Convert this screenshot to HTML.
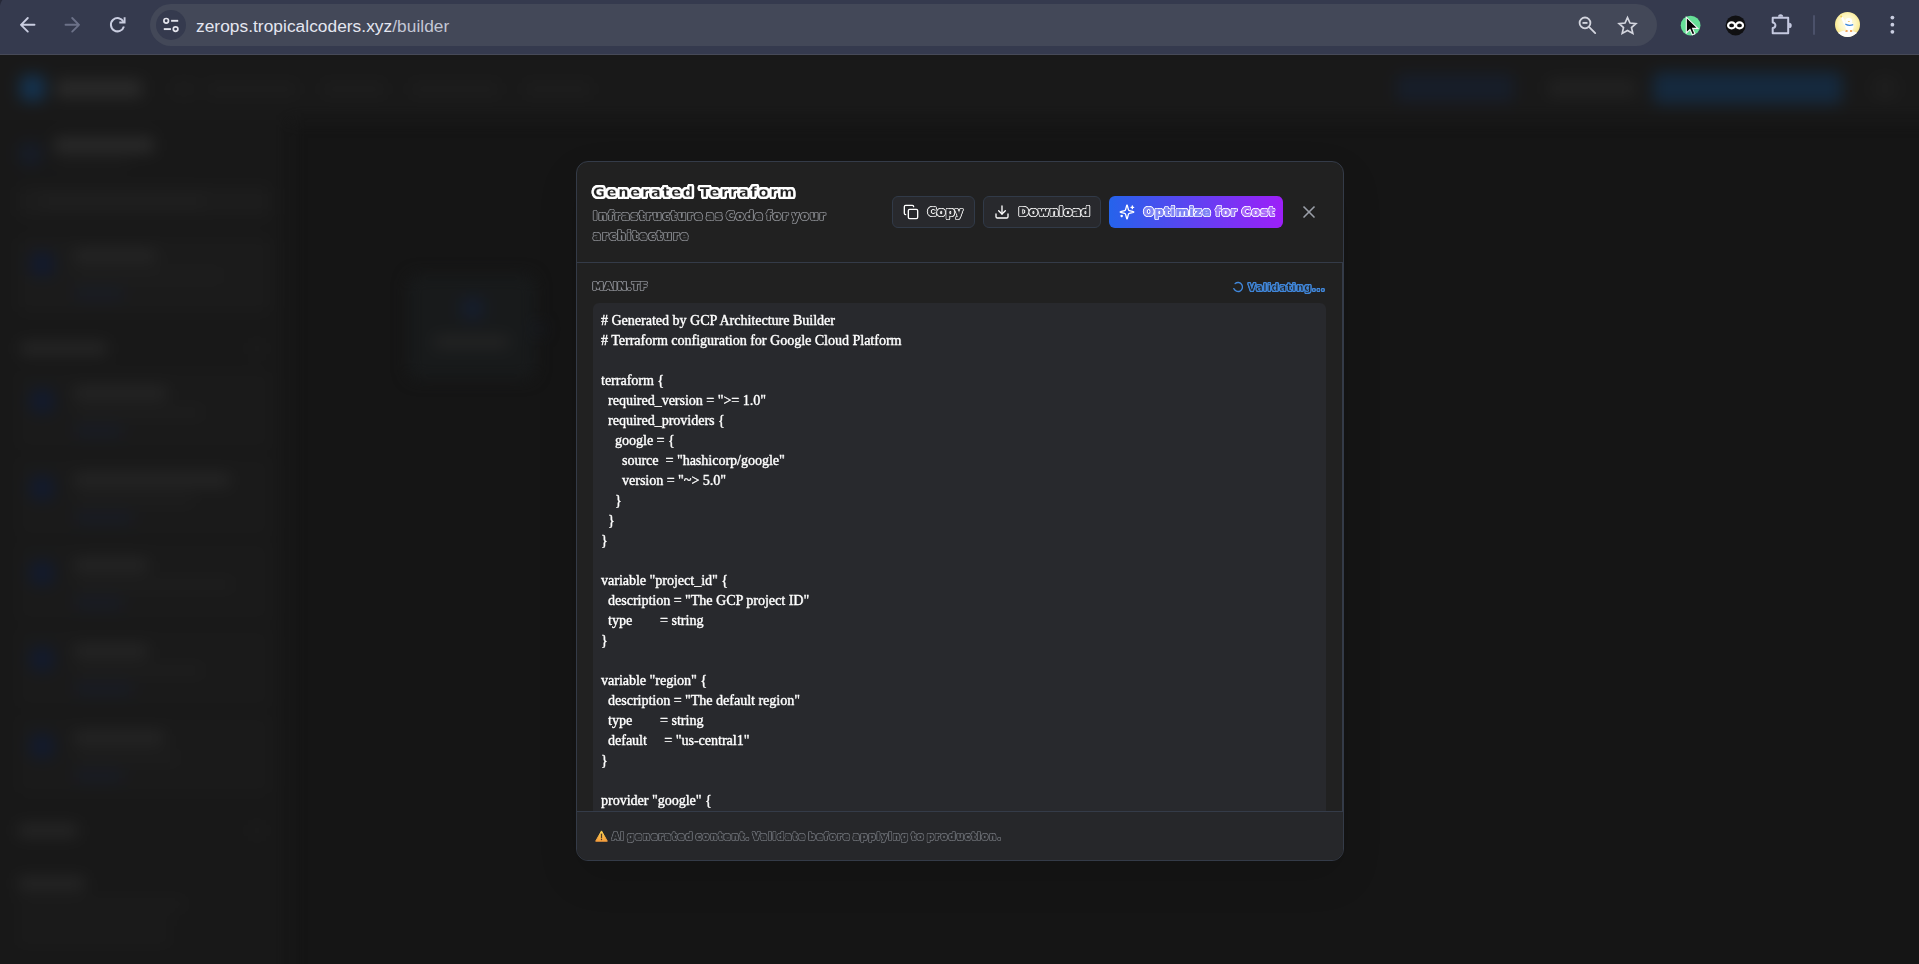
<!DOCTYPE html>
<html lang="en">
<head>
<meta charset="utf-8">
<title>GCP Architecture Builder</title>
<style>
*{box-sizing:border-box;margin:0;padding:0}
html,body{width:1919px;height:964px;overflow:hidden;background:#161616;font-family:"Liberation Sans",sans-serif;color:#fff}
/* ---------- browser chrome ---------- */
#chrome{position:absolute;left:0;top:0;width:1919px;height:55px;background:#353a4e;border-bottom:1px solid #474a58}
#chrome svg{position:absolute;overflow:visible}
#omni{position:absolute;left:150px;top:4px;width:1507px;height:42px;border-radius:21px;background:#434858}
#site{position:absolute;left:156px;top:10px;width:30px;height:30px;border-radius:15px;background:#353a4e}
#url{position:absolute;left:196px;top:14px;font-size:17.3px;line-height:24px;color:#e4e6f0;white-space:nowrap;letter-spacing:0.05px}
#url span{color:#c3c6d4}
.sep{position:absolute;left:1812.500px;top:15px;width:2.200px;height:19.500px;border-radius:1.100px;background:#4b516a}
/* ---------- page (blurred app behind) ---------- */
#page{position:absolute;left:0;top:55px;width:1919px;height:909px;background:#151515;overflow:hidden}
#bg{position:absolute;left:-20px;top:-20px;width:1959px;height:949px;filter:blur(7.500px)}
#bg>div{margin:20px 0 0 20px}
#bg div{position:absolute}
/* ---------- modal ---------- */
#modal{position:absolute;left:576px;top:106px;width:768px;height:700px;border:1px solid #343b48;border-radius:12px;background:#212121;overflow:hidden;box-shadow:0 16px 40px rgba(0,0,0,.12);will-change:transform}
.fx{font-family:"DejaVu Sans","Liberation Sans",sans-serif;font-weight:bold;white-space:nowrap}
#hdr{position:absolute;left:0;top:0;width:766px;height:101px;border-bottom:1px solid #343b48}
#title{position:absolute;left:16px;top:15.500px;font-size:14.500px;line-height:28px;letter-spacing:1.770px;word-spacing:-2px;color:#212121;-webkit-text-stroke:.3px #fff;text-shadow:2.20px 0.00px 0 #fff,2.03px 0.84px 0 #fff,1.56px 1.56px 0 #fff,0.84px 2.03px 0 #fff,0.00px 2.20px 0 #fff,-0.84px 2.03px 0 #fff,-1.56px 1.56px 0 #fff,-2.03px 0.84px 0 #fff,-2.20px 0.00px 0 #fff,-2.03px -0.84px 0 #fff,-1.56px -1.56px 0 #fff,-0.84px -2.03px 0 #fff,-0.00px -2.20px 0 #fff,0.84px -2.03px 0 #fff,1.56px -1.56px 0 #fff,2.03px -0.84px 0 #fff,1.10px 0.00px 0 #fff,0.78px 0.78px 0 #fff,0.00px 1.10px 0 #fff,-0.78px 0.78px 0 #fff,-1.10px 0.00px 0 #fff,-0.78px -0.78px 0 #fff,-0.00px -1.10px 0 #fff,0.78px -0.78px 0 #fff}
#sub{position:absolute;left:16px;top:44px;font-size:11.500px;line-height:20px;letter-spacing:1.400px;word-spacing:-2.900px;color:#212121;-webkit-text-stroke:.7px #212121;text-shadow:1.20px 0.00px 0 #888a8f,0.85px 0.85px 0 #888a8f,0.00px 1.20px 0 #888a8f,-0.85px 0.85px 0 #888a8f,-1.20px 0.00px 0 #888a8f,-0.85px -0.85px 0 #888a8f,-0.00px -1.20px 0 #888a8f,0.85px -0.85px 0 #888a8f}
.btn{position:absolute;top:34px;height:32px;border:1px solid #313a48;border-radius:6px;background:#28292d}
.btn svg{position:absolute;left:10px;top:7px}
.btn span{position:absolute;left:34.5px;top:7px;font-size:12.2px;line-height:16px;color:#28292d;-webkit-text-stroke:.7px #28292d;text-shadow:1.15px 0.00px 0 #f4f4f4,0.81px 0.81px 0 #f4f4f4,0.00px 1.15px 0 #f4f4f4,-0.81px 0.81px 0 #f4f4f4,-1.15px 0.00px 0 #f4f4f4,-0.81px -0.81px 0 #f4f4f4,-0.00px -1.15px 0 #f4f4f4,0.81px -0.81px 0 #f4f4f4}
#lbl{position:absolute;left:15.500px;top:16px;font-size:11px;line-height:16px;letter-spacing:.5px;color:#212121;-webkit-text-stroke:.7px #212121;text-shadow:1.20px 0.00px 0 #8b8d93,0.85px 0.85px 0 #8b8d93,0.00px 1.20px 0 #8b8d93,-0.85px 0.85px 0 #8b8d93,-1.20px 0.00px 0 #8b8d93,-0.85px -0.85px 0 #8b8d93,-0.00px -1.20px 0 #8b8d93,0.85px -0.85px 0 #8b8d93}
#val{position:absolute;right:16.500px;top:17px;font-size:10px;line-height:16px;letter-spacing:.68px;color:#212121;-webkit-text-stroke:.45px #4187da;text-shadow:1.05px 0.00px 0 #4187da,0.74px 0.74px 0 #4187da,0.00px 1.05px 0 #4187da,-0.74px 0.74px 0 #4187da,-1.05px 0.00px 0 #4187da,-0.74px -0.74px 0 #4187da,-0.00px -1.05px 0 #4187da,0.74px -0.74px 0 #4187da}
#val svg{position:absolute;left:-16.500px;top:.5px}
#warn{position:absolute;left:18px;top:18px}
#ftxt{position:absolute;left:34.7px;top:17px;font-size:9.6px;line-height:16px;letter-spacing:1.15px;word-spacing:-2.2px;color:#26272a;-webkit-text-stroke:.6px #26272a;text-shadow:1.00px 0.00px 0 #6d7076,0.71px 0.71px 0 #6d7076,0.00px 1.00px 0 #6d7076,-0.71px 0.71px 0 #6d7076,-1.00px 0.00px 0 #6d7076,-0.71px -0.71px 0 #6d7076,-0.00px -1.00px 0 #6d7076,0.71px -0.71px 0 #6d7076}
#close{position:absolute;left:722px;top:40px}
#body{position:absolute;left:0;top:101px;width:766px;height:549px;border-right:1px solid #343b48}
#code{position:absolute;left:16px;top:40px;width:733px;height:520px;border-radius:6px 6px 0 0;background:#28292d;padding:8px;font-family:"Liberation Serif",serif;font-size:14px;line-height:20px;color:#fff;white-space:pre;overflow:hidden;-webkit-text-stroke:.3px #fff;text-shadow:.6px .4px 0 rgba(255,255,255,.28)}
#ftr{position:absolute;left:0;top:649px;width:766px;height:49px;border-top:1px solid #343b48;background:#26272a}
</style>
</head>
<body>
<div id="chrome">
  <div id="omni"></div>
  <div id="site"></div>
  <div id="url">zerops.tropicalcoders.xyz<span>/builder</span></div>
  <div class="sep"></div>

  <svg style="left:0;top:0" width="1919" height="55" viewBox="0 0 1919 55" fill="none" stroke-linecap="round" stroke-linejoin="round">
    <!-- window corner -->
    <path d="M0 0h2.400C1.200 1.600.5 3.200 0 5.800z" fill="#262938" stroke="none"/>
    <!-- back -->
    <path d="M34.5 24.8H21M27.8 18l-6.8 6.8 6.8 6.8" stroke="#c9cde0" stroke-width="1.9"/>
    <!-- forward -->
    <path d="M65.5 24.8H79M72.2 18l6.8 6.8-6.8 6.8" stroke="#6c7188" stroke-width="1.9"/>
    <!-- reload -->
    <path d="M123.500 21.900A6.600 6.600 0 1 0 123.900 26.500" stroke="#c9cde0" stroke-width="2" stroke-linecap="butt"/>
    <path d="M124.600 17.200v5.300h-5.300" stroke="#c9cde0" stroke-width="1.900" stroke-linecap="butt" stroke-linejoin="miter"/>
    <!-- tune / site info -->
    <circle cx="166.200" cy="20.800" r="2.300" stroke="#e3e4ec" stroke-width="1.700"/>
    <path d="M171.100 20.800h7.100" stroke="#e3e4ec" stroke-width="1.900" stroke-linecap="butt"/>
    <circle cx="175.600" cy="29.100" r="2.300" stroke="#e3e4ec" stroke-width="1.700"/>
    <path d="M163.800 29.100h7.100" stroke="#e3e4ec" stroke-width="1.900" stroke-linecap="butt"/>
    <!-- zoom out magnifier -->
    <circle cx="1585" cy="22.900" r="5.400" stroke="#d3d5de" stroke-width="1.800"/>
    <path d="M1589 26.900l6.200 6.200" stroke="#d3d5de" stroke-width="1.800"/>
    <path d="M1582.500 22.900h5" stroke="#d3d5de" stroke-width="1.900" stroke-linecap="butt"/>
    <!-- star -->
    <path d="M1627.500 17.600l2.500 5.400 5.900.6-4.400 4 1.300 5.800-5.300-3-5.300 3 1.300-5.800-4.400-4 5.900-.6z" stroke="#d3d5de" stroke-width="1.700" stroke-linejoin="miter"/>
    <!-- green ext -->
    <circle cx="1690.600" cy="25.600" r="9.900" fill="#66df97" stroke="none"/>
    <path d="M1686.300 17.200v15.800l3.700-3.500 2.300 5.300 2.600-1.100-2.300-5.300h5.300z" fill="#060606" stroke="#f6f6f6" stroke-width="1.100" stroke-linejoin="miter"/>
    <!-- black ext -->
    <circle cx="1735.600" cy="25.400" r="10" fill="#101012" stroke="none"/>
    <ellipse cx="1731.600" cy="25.400" rx="3.500" ry="3" stroke="#fff" stroke-width="2.200"/>
    <ellipse cx="1739.500" cy="25.400" rx="3.500" ry="3" stroke="#fff" stroke-width="2.200"/>
    <!-- puzzle -->
    <path d="M1772.700 17.700h15.500v15.500h-15.500v-5.200a2.700 2.700 0 0 0 0-5.400z" stroke="#c5c9e0" stroke-width="2" stroke-linejoin="round"/>
    <path d="M1778 16.800a2.600 2.600 0 0 1 5.200 0z" fill="#c5c9e0" stroke="none"/>
    <path d="M1789.100 22.800a2.600 2.600 0 0 1 0 5.200z" fill="#c5c9e0" stroke="none"/>
    <!-- avatar -->
    <defs>
      <radialGradient id="av" cx=".5" cy=".45" r=".55"><stop offset="0" stop-color="#fffdf0"/><stop offset=".6" stop-color="#fdf5c0"/><stop offset="1" stop-color="#f8e684"/></radialGradient>
      <clipPath id="avc"><circle cx="1847.500" cy="24.500" r="12.500"/></clipPath>
    </defs>
    <circle cx="1847.500" cy="24.500" r="12.500" fill="url(#av)" stroke="none"/>
    <g clip-path="url(#avc)" stroke="none">
      <ellipse cx="1847.500" cy="37" rx="13" ry="6.500" fill="#fdfdfb"/>
      <ellipse cx="1849.500" cy="26.500" rx="4.200" ry="4.600" fill="#fefefe"/>
      <circle cx="1848.800" cy="21.300" r="3.300" fill="#fefefe"/>
      <path d="M1841 17.500l1.800-.8 3.300 6.600-2 1.600z" fill="#fefefe"/>
      <path d="M1845.500 23.600c2 1.300 5.200 1.500 7.600.4l.2 1.300c-2.600 1.100-5.800.9-8.100-.5z" fill="#3b86d9"/>
      <path d="M1847.800 21.200h2.200l-.6.900h-1.200z" fill="#f0b53c"/>
      <path d="M1845.800 30.200h1.800v1.600h-2.300zM1850 30.200h1.800l.5 1.600h-2.300z" fill="#ef8a2c"/>
      <circle cx="1841.200" cy="16.600" r="1" fill="#f3cf54"/>
    </g>
    <!-- menu dots -->
    <circle cx="1892.400" cy="17.600" r="1.900" fill="#c9cde0" stroke="none"/>
    <circle cx="1892.400" cy="24.700" r="1.900" fill="#c9cde0" stroke="none"/>
    <circle cx="1892.400" cy="31.800" r="1.900" fill="#c9cde0" stroke="none"/>
  </svg>
</div>
<div id="page">
  <div id="bg">
    <div style="left:-20px;top:-20px;width:1959px;height:85px;background:#191919;border-radius:0px"></div>
    <div style="left:-20px;top:65px;width:310px;height:864px;background:#181818;border-radius:0px"></div>
    <div style="left:20px;top:20px;width:25px;height:26px;background:#15324e;border-radius:6px"></div>
    <div style="left:56px;top:25px;width:86px;height:17px;background:#2b2b2b;border-radius:4px"></div>
    <div style="left:172px;top:27px;width:24px;height:14px;background:#1d1d1d;border-radius:5px"></div>
    <div style="left:206px;top:27px;width:92px;height:14px;background:#1d1d1d;border-radius:5px"></div>
    <div style="left:322px;top:27px;width:64px;height:14px;background:#1d1d1d;border-radius:5px"></div>
    <div style="left:410px;top:27px;width:90px;height:14px;background:#1d1d1d;border-radius:5px"></div>
    <div style="left:524px;top:27px;width:68px;height:14px;background:#1d1d1d;border-radius:5px"></div>
    <div style="left:1396px;top:19px;width:118px;height:28px;background:#171d29;border-radius:6px"></div>
    <div style="left:1548px;top:25px;width:88px;height:16px;background:#222222;border-radius:5px"></div>
    <div style="left:1653px;top:17px;width:189px;height:32px;background:#15293e;border-radius:6px"></div>
    <div style="left:1872px;top:21px;width:26px;height:24px;background:#1e1e1e;border-radius:12px"></div>
    <div style="left:19px;top:87px;width:23px;height:24px;background:#171c27;border-radius:6px"></div>
    <div style="left:54px;top:83px;width:100px;height:14px;background:#2c2c2c;border-radius:4px"></div>
    <div style="left:54px;top:103px;width:76px;height:8px;background:#1c1c1c;border-radius:4px"></div>
    <div style="left:18px;top:131px;width:252px;height:31px;background:#1c1c1c;border-radius:6px"></div>
    <div style="left:40px;top:141px;width:165px;height:10px;background:#202020;border-radius:4px"></div>
    <div style="left:18px;top:182px;width:252px;height:76px;background:#1b1b1b;border-radius:8px"></div>
    <div style="left:30px;top:197px;width:24px;height:24px;background:#121a2d;border-radius:6px"></div>
    <div style="left:74px;top:195px;width:82px;height:12px;background:#262626;border-radius:4px"></div>
    <div style="left:74px;top:216px;width:150px;height:9px;background:#1e1e1e;border-radius:4px"></div>
    <div style="left:74px;top:234px;width:50px;height:10px;background:#181c27;border-radius:5px"></div>
    <div style="left:20px;top:287px;width:87px;height:13px;background:#262626;border-radius:4px"></div>
    <div style="left:250px;top:287px;width:14px;height:13px;background:#1c1c1c;border-radius:4px"></div>
    <div style="left:18px;top:316px;width:252px;height:78px;background:#1a1a1a;border-radius:8px"></div>
    <div style="left:18px;top:403px;width:252px;height:78px;background:#1a1a1a;border-radius:8px"></div>
    <div style="left:18px;top:488px;width:252px;height:78px;background:#1a1a1a;border-radius:8px"></div>
    <div style="left:18px;top:574px;width:252px;height:78px;background:#1a1a1a;border-radius:8px"></div>
    <div style="left:18px;top:661px;width:252px;height:78px;background:#1a1a1a;border-radius:8px"></div>
    <div style="left:30px;top:334px;width:24px;height:24px;background:#121a2d;border-radius:6px"></div>
    <div style="left:74px;top:332px;width:93px;height:12px;background:#262626;border-radius:4px"></div>
    <div style="left:74px;top:353px;width:130px;height:9px;background:#1e1e1e;border-radius:4px"></div>
    <div style="left:74px;top:371px;width:50px;height:10px;background:#181c27;border-radius:5px"></div>
    <div style="left:30px;top:421px;width:24px;height:24px;background:#121a2d;border-radius:6px"></div>
    <div style="left:74px;top:419px;width:156px;height:12px;background:#262626;border-radius:4px"></div>
    <div style="left:74px;top:440px;width:120px;height:9px;background:#1e1e1e;border-radius:4px"></div>
    <div style="left:74px;top:458px;width:60px;height:10px;background:#181c27;border-radius:5px"></div>
    <div style="left:30px;top:506px;width:24px;height:24px;background:#121a2d;border-radius:6px"></div>
    <div style="left:74px;top:504px;width:74px;height:12px;background:#262626;border-radius:4px"></div>
    <div style="left:74px;top:525px;width:160px;height:9px;background:#1e1e1e;border-radius:4px"></div>
    <div style="left:74px;top:543px;width:50px;height:10px;background:#181c27;border-radius:5px"></div>
    <div style="left:30px;top:592px;width:24px;height:24px;background:#121a2d;border-radius:6px"></div>
    <div style="left:74px;top:590px;width:74px;height:12px;background:#262626;border-radius:4px"></div>
    <div style="left:74px;top:611px;width:130px;height:9px;background:#1e1e1e;border-radius:4px"></div>
    <div style="left:74px;top:629px;width:60px;height:10px;background:#181c27;border-radius:5px"></div>
    <div style="left:30px;top:679px;width:24px;height:24px;background:#121a2d;border-radius:6px"></div>
    <div style="left:74px;top:677px;width:90px;height:12px;background:#262626;border-radius:4px"></div>
    <div style="left:74px;top:698px;width:105px;height:9px;background:#1e1e1e;border-radius:4px"></div>
    <div style="left:74px;top:716px;width:50px;height:10px;background:#181c27;border-radius:5px"></div>
    <div style="left:18px;top:769px;width:60px;height:13px;background:#262626;border-radius:4px"></div>
    <div style="left:250px;top:769px;width:14px;height:13px;background:#1c1c1c;border-radius:4px"></div>
    <div style="left:18px;top:822px;width:67px;height:13px;background:#262626;border-radius:4px"></div>
    <div style="left:18px;top:845px;width:167px;height:8px;background:#1d1d1d;border-radius:4px"></div>
    <div style="left:18px;top:863px;width:152px;height:8px;background:#1d1d1d;border-radius:4px"></div>
    <div style="left:18px;top:879px;width:152px;height:8px;background:#1d1d1d;border-radius:4px"></div>
    <div style="left:408px;top:220px;width:127px;height:104px;background:#181a1b;border-radius:10px"></div>
    <div style="left:461px;top:242px;width:23px;height:23px;background:#161d2c;border-radius:6px"></div>
    <div style="left:434px;top:281px;width:75px;height:12px;background:#242424;border-radius:4px"></div>
    <div style="left:534px;top:269px;width:10px;height:10px;background:#161b27;border-radius:5px"></div>
  </div>
  <div id="modal">
    <div id="hdr">
      <div id="title" class="fx">Generated Terraform</div>
      <div id="sub" class="fx">Infrastructure as Code for your<br>architecture</div>
      <div class="btn" style="left:315px;width:83px">
        <svg width="16" height="16" viewBox="0 0 24 24" fill="none" stroke="#fff" stroke-width="2" stroke-linecap="round" stroke-linejoin="round"><rect x="8" y="8" width="14" height="14" rx="2" ry="2"/><path d="M4 16c-1.100 0-2-.9-2-2V4c0-1.100.9-2 2-2h10c1.100 0 2 .9 2 2"/></svg>
        <span class="fx" style="letter-spacing:.5px">Copy</span>
      </div>
      <div class="btn" style="left:406px;width:118px">
        <svg width="16" height="16" viewBox="0 0 24 24" fill="none" stroke="#fff" stroke-width="2" stroke-linecap="round" stroke-linejoin="round"><path d="M21 15v4a2 2 0 0 1-2 2H5a2 2 0 0 1-2-2v-4"/><path d="M7 10l5 5 5-5"/><path d="M12 15V3"/></svg>
        <span class="fx" style="letter-spacing:.52px">Download</span>
      </div>
      <div class="btn" style="left:532px;width:174px;border:0;background:linear-gradient(90deg,#2563eb,#9d1ff8)">
        <svg style="left:10px;top:8px" width="16" height="16" viewBox="0 0 24 24" fill="none" stroke="#fff" stroke-width="2" stroke-linecap="round" stroke-linejoin="round"><path d="M9.900 15.500a2 2 0 0 0-1.400-1.400l-6.100-1.600a.5.500 0 0 1 0-1l6.100-1.600a2 2 0 0 0 1.400-1.400l1.600-6.100a.5.500 0 0 1 1 0l1.600 6.100a2 2 0 0 0 1.400 1.400l6.100 1.600a.5.500 0 0 1 0 1l-6.100 1.600a2 2 0 0 0-1.400 1.400l-1.600 6.100a.5.500 0 0 1-1 0z"/><path d="M20 3v4"/><path d="M22 5h-4"/><path d="M4 17v2"/><path d="M5 18H3"/></svg>
        <span class="fx" style="top:8px;letter-spacing:.82px;word-spacing:-1px;color:#7d83f5;-webkit-text-stroke-color:#7d83f5;text-shadow:1.15px 0.00px 0 #fff,0.81px 0.81px 0 #fff,0.00px 1.15px 0 #fff,-0.81px 0.81px 0 #fff,-1.15px 0.00px 0 #fff,-0.81px -0.81px 0 #fff,-0.00px -1.15px 0 #fff,0.81px -0.81px 0 #fff">Optimize <i style="font-style:normal;color:#9872f8;-webkit-text-stroke-color:#9872f8">for</i> <i style="font-style:normal;color:#a866f9;-webkit-text-stroke-color:#a866f9">Cost</i></span>
      </div>
      <svg id="close" width="20" height="20" viewBox="0 0 24 24" fill="none" stroke="#9a9fa8" stroke-width="2" stroke-linecap="round"><path d="M18 6L6 18"/><path d="M6 6l12 12"/></svg>
    </div>
    <div id="body">
      <div id="lbl" class="fx">MAIN.TF</div>
      <div id="val" class="fx"><svg width="12" height="12" viewBox="0 0 24 24" fill="none" stroke="#4187da" stroke-width="2.800" stroke-linecap="round"><path transform="rotate(231 12 12)" d="M21 12a9 9 0 1 1-6.200-8.560"/></svg>Validating...</div>
      <div id="code"># Generated by GCP Architecture Builder
# Terraform configuration for Google Cloud Platform

terraform {
  required_version = "&gt;= 1.0"
  required_providers {
    google = {
      source  = "hashicorp/google"
      version = "~&gt; 5.0"
    }
  }
}

variable "project_id" {
  description = "The GCP project ID"
  type        = string
}

variable "region" {
  description = "The default region"
  type        = string
  default     = "us-central1"
}

provider "google" {
  project = var.project_id
  region  = var.region
}</div>
    </div>
    <div id="ftr">
      <svg id="warn" width="13" height="12" viewBox="0 0 13 12"><defs><linearGradient id="wg" x1="0" y1="0" x2="0" y2="1"><stop offset="0" stop-color="#fdd552"/><stop offset="1" stop-color="#f69d3c"/></linearGradient></defs><path d="M6.500.9L12.300 11.200H.7z" fill="url(#wg)" stroke="url(#wg)" stroke-width="1" stroke-linejoin="round"/><path d="M6.500 4.200v3.500" stroke="#4a3a2a" stroke-width="1.200" stroke-linecap="round"/><circle cx="6.500" cy="9.500" r=".7" fill="#4a3a2a"/></svg>
      <div id="ftxt" class="fx">AI generated content. Validate before applying to production.</div>
    </div>
  </div>
</div>
</body>
</html>
